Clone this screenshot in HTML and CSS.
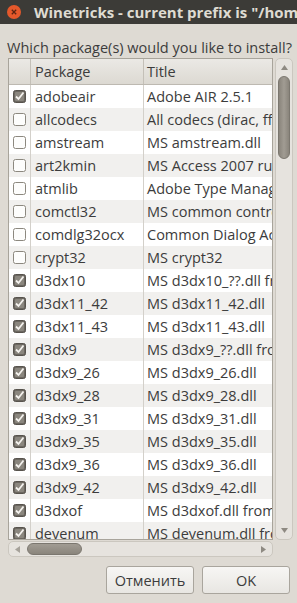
FILE: index.html
```html
<!DOCTYPE html>
<html lang="en">
<head>
    <meta charset="UTF-8">
    <title>Winetricks</title>
    <link rel="stylesheet" href="styles.css">
</head>
<body>
    <div class="titlebar">
        <span class="close-btn">
            <svg width="14" height="14" viewBox="0 0 14 14"><circle cx="7" cy="7" r="7" fill="#e4582b"/><path d="M4.8 4.8 L9.2 9.2 M9.2 4.8 L4.8 9.2" stroke="#5a2412" stroke-width="1.3"/></svg>
        </span>
        <span class="title-text">Winetricks - current prefix is "/home/user/.wine"</span>
    </div>

    <div class="dialog">
        <div class="prompt">Which package(s) would you like to install?</div>

        <div class="scrolled">
            <div class="list">
                <div class="list-header">
                    <div class="col-check"></div>
                    <div class="col-pkg">Package</div>
                    <div class="col-title">Title</div>
                </div>
                <div id="rows"></div>
            </div>

            <div class="vscroll">
                <svg class="arrow" width="7" height="5" viewBox="0 0 7 5"><path d="M3.5 0 L7 5 L0 5 Z" fill="#8e8a82"/></svg>
                <div class="vthumb"></div>
                <span class="spacer"></span>
                <svg class="arrow" width="7" height="5" viewBox="0 0 7 5"><path d="M0 0 L7 0 L3.5 5 Z" fill="#8e8a82"/></svg>
            </div>

            <div class="hscroll">
                <svg class="arrow" width="5" height="7" viewBox="0 0 5 7"><path d="M5 0 L5 7 L0 3.5 Z" fill="#a6a29a"/></svg>
                <div class="hthumb"></div>
                <span class="spacer"></span>
                <svg class="arrow" width="5" height="7" viewBox="0 0 5 7"><path d="M0 0 L5 3.5 L0 7 Z" fill="#8e8a82"/></svg>
            </div>
        </div>

        <div class="buttons">
            <button class="btn">Отменить</button>
            <button class="btn">OK</button>
        </div>
    </div>

    <script>
        const packages = [
            ['adobeair', 'Adobe AIR 2.5.1', true],
            ['allcodecs', 'All codecs (dirac, ffdshow, ogg, xvid)', false],
            ['amstream', 'MS amstream.dll', false],
            ['art2kmin', 'MS Access 2007 runtime', false],
            ['atmlib', 'Adobe Type Manager', false],
            ['comctl32', 'MS common controls 5.80', false],
            ['comdlg32ocx', 'Common Dialog ActiveX Control', false],
            ['crypt32', 'MS crypt32', false],
            ['d3dx10', 'MS d3dx10_??.dll from DirectX', true],
            ['d3dx11_42', 'MS d3dx11_42.dll', true],
            ['d3dx11_43', 'MS d3dx11_43.dll', true],
            ['d3dx9', 'MS d3dx9_??.dll from DirectX', true],
            ['d3dx9_26', 'MS d3dx9_26.dll', true],
            ['d3dx9_28', 'MS d3dx9_28.dll', true],
            ['d3dx9_31', 'MS d3dx9_31.dll', true],
            ['d3dx9_35', 'MS d3dx9_35.dll', true],
            ['d3dx9_36', 'MS d3dx9_36.dll', true],
            ['d3dx9_42', 'MS d3dx9_42.dll', true],
            ['d3dxof', 'MS d3dxof.dll from DirectX', true],
            ['devenum', 'MS devenum.dll from DirectX', true]
        ];

        const checkedBox = '<svg width="13" height="13" viewBox="0 0 13 13"><rect x="0.5" y="0.5" width="12" height="12" rx="2" fill="#6b6760" stroke="#57534d"/><rect x="2" y="2" width="9" height="9" rx="1" fill="#8a867e"/><path d="M3 6.5 L5.5 9 L10.5 2.5" fill="none" stroke="#f4f2ee" stroke-width="1.8"/></svg>';
        const emptyBox = '<svg width="13" height="13" viewBox="0 0 13 13"><rect x="0.5" y="0.5" width="12" height="12" rx="2" fill="#fdfdfc" stroke="#8c887f"/></svg>';

        const rows = document.getElementById('rows');
        packages.forEach(([name, title, checked]) => {
            const row = document.createElement('div');
            row.className = 'list-row';
            row.innerHTML = `<div class="col-check">${checked ? checkedBox : emptyBox}</div>
                <div class="col-pkg">${name}</div>
                <div class="col-title">${title}</div>`;
            rows.appendChild(row);
        });
    </script>
</body>
</html>
```

FILE: styles.css
```css
body {
    margin: 0;
    width: 297px;
    height: 603px;
    overflow: hidden;
    background-color: #dedad3;
    font-family: "Open Sans", "DejaVu Sans", sans-serif;
    font-size: 14.5px;
    color: #3c3c3c;
}

.titlebar {
    height: 24px;
    background-color: #3c3b37;
    display: flex;
    align-items: center;
    padding-left: 7px;
    white-space: nowrap;
    overflow: hidden;
}

.close-btn {
    display: flex;
    width: 14px;
    height: 14px;
}

.title-text {
    margin-left: 13px;
    font-weight: bold;
    font-size: 15px;
    color: #dfdbd2;
}

.dialog {
    padding: 0 4px 0 8px;
}

.prompt {
    margin: 14px 0 0 -1px;
    height: 19px;
    line-height: 19px;
    white-space: nowrap;
}

.scrolled {
    margin-top: 1px;
    display: grid;
    grid-template-columns: 265px 18px;
    grid-template-rows: 482px 16px;
    column-gap: 2px;
    row-gap: 1px;
}

.list {
    border: 1px solid #a8a49b;
    background-color: #fff;
    overflow: hidden;
}

.list-header,
.list-row {
    display: flex;
    white-space: nowrap;
}

.list-header {
    height: 25px;
    line-height: 25px;
    background: linear-gradient(#ebe9e5, #dcd9d2);
    border-bottom: 1px solid #bdb9b1;
}

.list-row {
    height: 23px;
    line-height: 23px;
}

.list-row:nth-child(even) {
    background-color: #f1f0ee;
}

.col-check {
    width: 21px;
    flex: none;
    display: flex;
    align-items: center;
    justify-content: center;
    border-right: 1px solid #d3d0ca;
}

.col-pkg {
    width: 108px;
    flex: none;
    padding-left: 4px;
    border-right: 1px solid #d3d0ca;
}

.col-title {
    padding-left: 3px;
}

.list-header .col-check,
.list-header .col-pkg {
    border-right-color: #c4c0b8;
}

.vscroll,
.hscroll {
    display: flex;
    align-items: center;
    background-color: #e6e3de;
    border: 1px solid #cbc7bf;
    border-radius: 5px;
}

.vscroll {
    flex-direction: column;
    padding: 6px 0;
}

.hscroll {
    padding: 0 6px;
}

.arrow {
    flex: none;
}

.spacer {
    flex: 1;
}

.vthumb {
    margin-top: 6px;
    width: 12px;
    height: 83px;
    border-radius: 6px;
    background: linear-gradient(90deg, #8a857c, #a19c93 50%, #8a857c);
    border: 1px solid #7b776f;
    box-sizing: border-box;
}

.hthumb {
    margin-left: 7px;
    width: 55px;
    height: 12px;
    border-radius: 6px;
    background: linear-gradient(#a19c93, #8a857c);
    border: 1px solid #7b776f;
    box-sizing: border-box;
}

.buttons {
    margin-top: 9px;
    display: flex;
    justify-content: flex-end;
    gap: 8px;
    padding-right: 3px;
}

.btn {
    width: 88px;
    height: 28px;
    font-family: inherit;
    font-size: 14.5px;
    color: #3c3c3c;
    background: linear-gradient(#f7f6f4, #e8e6e2);
    border: 1px solid #a9a59d;
    border-radius: 3px;
}
```
